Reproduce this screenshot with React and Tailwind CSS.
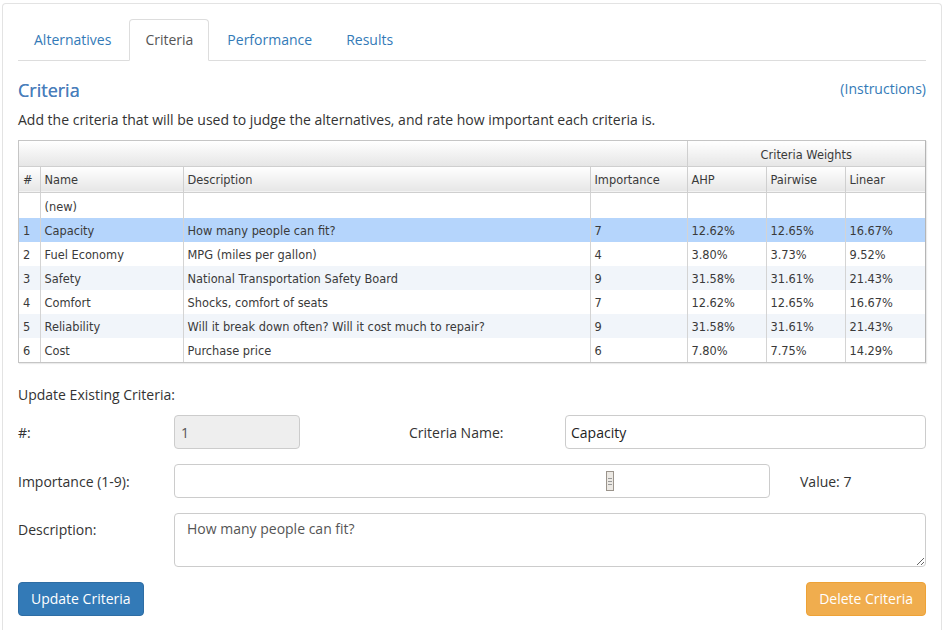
import React from 'react';

const rows = [
  { n: '1', name: 'Capacity', desc: 'How many people can fit?', imp: '7', ahp: '12.62%', pw: '12.65%', lin: '16.67%' },
  { n: '2', name: 'Fuel Economy', desc: 'MPG (miles per gallon)', imp: '4', ahp: '3.80%', pw: '3.73%', lin: '9.52%' },
  { n: '3', name: 'Safety', desc: 'National Transportation Safety Board', imp: '9', ahp: '31.58%', pw: '31.61%', lin: '21.43%' },
  { n: '4', name: 'Comfort', desc: 'Shocks, comfort of seats', imp: '7', ahp: '12.62%', pw: '12.65%', lin: '16.67%' },
  { n: '5', name: 'Reliability', desc: 'Will it break down often? Will it cost much to repair?', imp: '9', ahp: '31.58%', pw: '31.61%', lin: '21.43%' },
  { n: '6', name: 'Cost', desc: 'Purchase price', imp: '6', ahp: '7.80%', pw: '7.75%', lin: '14.29%' },
];

const th = 'border-r border-b border-[#cfcfcf] bg-gradient-to-b from-white to-[#e6e6e6] px-[4px] pt-[4px] pb-0 text-left font-normal';
const td = 'border-r border-[#d4d4d4] px-[4px] pt-[4px] pb-0';

export default function App() {
  return (
    <div className="min-h-screen bg-white pt-[3px] pl-[2px] pr-[2px] font-['Open_Sans',sans-serif] text-[14px] text-[#333]">
      <div className="rounded-t-[4px] border border-b-0 border-[#e3e3e3] px-[15px] pt-[15px] pb-[14px]">
        {/* Tabs */}
        <div className="flex border-b border-[#ddd]">
          {['Alternatives', 'Criteria', 'Performance', 'Results'].map((t) =>
            t === 'Criteria' ? (
              <div key={t} className="-mb-px mr-[2px] flex h-[42px] items-center rounded-t-[4px] border border-b-white border-[#ddd] bg-white px-[15px] pb-[1px] text-[#555]">
                {t}
              </div>
            ) : (
              <div key={t} className="mr-[2px] flex h-[41px] items-center px-[16px] text-[#337ab7]">{t}</div>
            )
          )}
        </div>

        {/* Heading */}
        <div className="mt-[16px] flex items-center justify-between">
          <h2 className="text-[18px] leading-[26px] text-[#4a7ebb] [text-shadow:0_0_0.4px_#4a7ebb]">Criteria</h2>
          <a className="mb-[4px] text-[#337ab7]">(Instructions)</a>
        </div>
        <p className="mt-[7px] leading-[20px]">Add the criteria that will be used to judge the alternatives, and rate how important each criteria is.</p>

        {/* Table */}
        <div className="mt-[10px] border border-[#c5c5c5] border-r-[#b5b5b5] shadow-[1px_1px_1px_rgba(0,0,0,0.08)]">
          <table className="w-full border-collapse font-['DejaVu_Sans',Verdana,sans-serif] text-[11.4px] text-[#3a3a3a]">
            <colgroup>
              <col className="w-[21px]" />
              <col className="w-[143px]" />
              <col className="w-[407px]" />
              <col className="w-[97px]" />
              <col className="w-[79px]" />
              <col className="w-[79px]" />
              <col />
            </colgroup>
            <thead>
              <tr className="h-[25px]">
                <th colSpan={4} className={th}></th>
                <th colSpan={3} className={th + ' !text-center !border-r-0'}>Criteria Weights</th>
              </tr>
              <tr className="h-[26px]">
                <th className={th}>#</th>
                <th className={th}>Name</th>
                <th className={th}>Description</th>
                <th className={th}>Importance</th>
                <th className={th}>AHP</th>
                <th className={th}>Pairwise</th>
                <th className={th + ' !border-r-0'}>Linear</th>
              </tr>
            </thead>
            <tbody>
              <tr className="h-[26px]">
                <td className={td}></td>
                <td className={td}>(new)</td>
                <td className={td}></td>
                <td className={td}></td>
                <td className={td}></td>
                <td className={td}></td>
                <td className="px-[4px]"></td>
              </tr>
              {rows.map((r, i) => (
                <tr
                  key={r.n}
                  className={`h-[24px] ${i === 0 ? 'bg-[#b5d5fc]' : i % 2 === 0 ? 'bg-[#f1f5fa]' : 'bg-white'}`}
                >
                  <td className={td}>{r.n}</td>
                  <td className={td}>{r.name}</td>
                  <td className={td}>{r.desc}</td>
                  <td className={td}>{r.imp}</td>
                  <td className={td}>{r.ahp}</td>
                  <td className={td}>{r.pw}</td>
                  <td className="px-[4px] pt-[4px] pb-0">{r.lin}</td>
                </tr>
              ))}
            </tbody>
          </table>
        </div>

        {/* Form */}
        <div className="mt-[22px] leading-[20px]">Update Existing Criteria:</div>

        <div className="mt-[10px] flex items-center">
          <label className="w-[156px]">#:</label>
          <div className="flex h-[34px] w-[126px] items-center rounded-[4px] border border-[#ccc] bg-[#eee] px-[6px] text-[#555]">1</div>
          <label className="ml-[109px] w-[156px]">Criteria Name:</label>
          <input
            defaultValue="Capacity"
            className="h-[34px] flex-1 rounded-[4px] border border-[#ccc] px-[5px] font-['Open_Sans',sans-serif] text-[14px] text-[#222] outline-none"
          />
        </div>

        <div className="mt-[15px] flex items-center">
          <label className="w-[156px]">Importance (1-9):</label>
          <div className="relative h-[34px] w-[596px] rounded-[4px] border border-[#ccc]">
            <div className="absolute left-[431px] top-[6px] flex h-[20px] w-[8px] flex-col items-center justify-center gap-[2px] border border-[#9b948c] bg-[#ece9e4]">
              <span className="h-px w-[4px] bg-[#999]" />
              <span className="h-px w-[4px] bg-[#999]" />
              <span className="h-px w-[4px] bg-[#999]" />
            </div>
          </div>
          <div className="ml-[30px]">Value: 7</div>
        </div>

        <div className="mt-[15px] flex items-start">
          <label className="w-[156px] pt-[6px]">Description:</label>
          <textarea
            defaultValue="How many people can fit?"
            className="h-[54px] flex-1 rounded-[4px] border border-[#ccc] px-[12px] py-[5px] font-['Open_Sans',sans-serif] text-[14px] leading-[20px] text-[#555] outline-none"
          />
        </div>

        <div className="mt-[15px] flex justify-between">
          <button className="h-[34px] rounded-[4px] border border-[#2e6da4] bg-[#337ab7] px-[12px] pb-[1px] text-white">Update Criteria</button>
          <button className="h-[34px] rounded-[4px] border border-[#eea236] bg-[#f0ad4e] px-[12px] pb-[1px] text-white">Delete Criteria</button>
        </div>
      </div>
    </div>
  );
}
